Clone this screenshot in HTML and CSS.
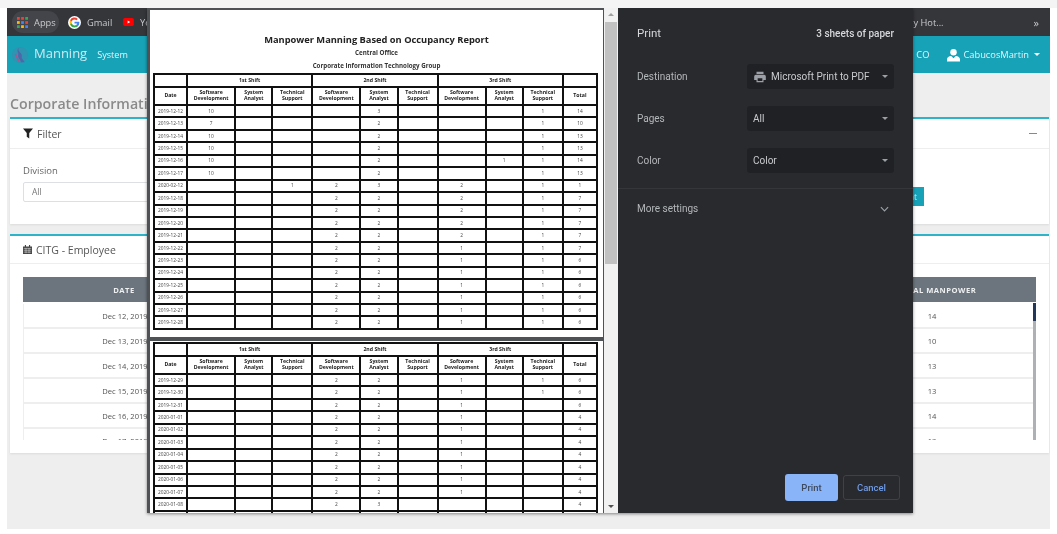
FILE: index.html
```html
<!DOCTYPE html>
<html lang="en">
<head>
<meta charset="utf-8">
<title>Manning - Print</title>
<link rel="stylesheet" href="styles.css">
</head>
<body>
<div class="topstrip"></div>
<div class="shot">
  <div class="bookmarks">
    <div class="bm bm-apps">
      <svg class="ic-apps" viewBox="0 0 12 12" width="11" height="11"><g><rect width="3" height="3" fill="#ea4335"/><rect x="4.5" width="3" height="3" fill="#ea4335"/><rect x="9" width="3" height="3" fill="#34a853"/><rect y="4.5" width="3" height="3" fill="#fbbc04"/><rect x="4.5" y="4.5" width="3" height="3" fill="#4285f4"/><rect x="9" y="4.5" width="3" height="3" fill="#ea4335"/><rect y="9" width="3" height="3" fill="#34a853"/><rect x="4.5" y="9" width="3" height="3" fill="#fbbc04"/><rect x="9" y="9" width="3" height="3" fill="#4285f4"/></g></svg>
      <span>Apps</span>
    </div>
    <div class="bm bm-gmail">
      <svg viewBox="0 0 24 24" width="13" height="13"><circle cx="12" cy="12" r="12" fill="#fff"/><path d="M21 12.2c0-.7-.1-1.3-.2-1.8H12v3.5h5a4.3 4.3 0 0 1-1.900 2.800v2.300h3A9 9 0 0 0 21 12.200z" fill="#4285f4"/><path d="M12 21c2.500 0 4.600-.8 6.100-2.200l-3-2.300c-.8.6-1.900.9-3.100.9-2.400 0-4.400-1.600-5.100-3.800H3.800v2.400A9 9 0 0 0 12 21z" fill="#34a853"/><path d="M6.900 13.600a5.400 5.400 0 0 1 0-3.400V7.800H3.800a9 9 0 0 0 0 8.200z" fill="#fbbc04"/><path d="M12 6.600c1.300 0 2.500.5 3.500 1.400l2.600-2.600A9 9 0 0 0 3.800 7.800l3.100 2.400C7.600 8.100 9.600 6.600 12 6.600z" fill="#ea4335"/></svg>
      <span>Gmail</span>
    </div>
    <div class="bm bm-yt">
      <svg viewBox="0 0 12 9" width="11" height="8"><rect width="12" height="9" rx="2" fill="#f00"/><path d="M5 2.700v3.600L8 4.500z" fill="#fff"/></svg>
      <span>YouTube</span>
    </div>
    <div class="bm bm-hot"><span>Occupancy Hot...</span></div>
    <div class="bm bm-more">»</div>
  </div>

  <nav class="navbar">
    <svg class="logo" viewBox="0 0 20 20" width="18" height="20"><circle cx="10" cy="10" r="9" fill="#2f93b2"/><path d="M9 2c-3 4 4 6 3 9s3 5 3 7l-4 0c0-3-4-5-3-8S5 5 9 2z" fill="#4f66a8"/><path d="M5 9c1 2 2 5 4 8" stroke="#a5568f" stroke-width="1.500" fill="none"/></svg>
    <span class="brand">Manning</span>
    <span class="nav-link">System</span>
    <span class="nav-co">CO</span>
    <svg class="ic-user" viewBox="0 0 14 14" width="13" height="14"><circle cx="7" cy="4" r="3.500" fill="#fff"/><path d="M0 14v-2.500C0 9.500 2 8.200 4.500 8L7 10.500 9.500 8c2.500.2 4.500 1.500 4.500 3.500V14z" fill="#fff"/></svg>
    <span class="nav-user">CabucosMartin</span>
    <span class="caret caret-white"></span>
  </nav>

  <main class="content">
    <h1 class="page-title">Corporate Information Technology Group</h1>

    <section class="card card-filter">
      <header class="card-head">
        <svg viewBox="0 0 12 12" width="10" height="11"><path d="M0 0h12L7.500 5.500V12l-3-2V5.500z" fill="#222"/></svg>
        <span>Filter</span>
        <span class="collapse-dash"></span>
      </header>
      <div class="card-body">
        <label class="field-label">Division</label>
        <div class="filter-row">
          <div class="select-box">All</div>
          <button class="btn-generate">Print</button>
        </div>
      </div>
    </section>

    <section class="card card-list">
      <header class="card-head card-head-list">
        <svg viewBox="0 0 12 12" width="9" height="11"><path d="M0 2h12v10H0z" fill="#444"/><path d="M2.500 0h1.500v3H2.500zM8 0h1.500v3H8z" fill="#444"/><path d="M1 4.500h10M1 7h10M1 9.500h10M4 4v7M8 4v7" stroke="#fff" stroke-width=".6"/></svg>
        <span>CITG - Employee</span>
      </header>
      <div class="list-wrap">
        <div class="list-row list-head"><span>Date</span><span></span><span></span><span></span><span>Total Manpower</span></div>
        <div class="list-scroll">
          <div class="list-row"><span>Dec 12, 2019</span><span></span><span></span><span></span><span>14</span></div>
          <div class="list-row"><span>Dec 13, 2019</span><span></span><span></span><span></span><span>10</span></div>
          <div class="list-row"><span>Dec 14, 2019</span><span></span><span></span><span></span><span>13</span></div>
          <div class="list-row"><span>Dec 15, 2019</span><span></span><span></span><span></span><span>13</span></div>
          <div class="list-row"><span>Dec 16, 2019</span><span></span><span></span><span></span><span>14</span></div>
          <div class="list-row"><span>Dec 17, 2019</span><span></span><span></span><span></span><span>13</span></div>
        </div>
        <div class="list-bar"><div class="list-thumb"></div></div>
      </div>
    </section>
  </main>

  <div class="dialog">
    <div class="preview">
      <div class="pages">
        <div class="paper paper-1">
          <h2 class="rep-title">Manpower Manning Based on Occupancy Report</h2>
          <p class="rep-sub rep-sub-1">Central Office</p>
          <p class="rep-sub rep-sub-2">Corporate Information Technology Group</p>
          <table class="rep">
            <colgroup><col class="c-date"><col class="c-sd"><col class="c-sa"><col class="c-ts"><col class="c-sd"><col class="c-sa"><col class="c-ts"><col class="c-sd"><col class="c-sa"><col class="c-ts"><col class="c-tot"></colgroup>
            <thead>
              <tr class="h1"><th></th><th colspan="3">1st Shift</th><th colspan="3">2nd Shift</th><th colspan="3">3rd Shift</th><th></th></tr>
              <tr class="h2"><th>Date</th><th>Software Development</th><th>System Analyst</th><th>Technical Support</th><th>Software Development</th><th>System Analyst</th><th>Technical Support</th><th>Software Development</th><th>System Analyst</th><th>Technical Support</th><th>Total</th></tr>
            </thead>
            <tbody>
              <tr><td>2019-12-12</td><td>10</td><td></td><td></td><td></td><td>3</td><td></td><td></td><td></td><td>1</td><td>14</td></tr>
              <tr><td>2019-12-13</td><td>7</td><td></td><td></td><td></td><td>2</td><td></td><td></td><td></td><td>1</td><td>10</td></tr>
              <tr><td>2019-12-14</td><td>10</td><td></td><td></td><td></td><td>2</td><td></td><td></td><td></td><td>1</td><td>13</td></tr>
              <tr><td>2019-12-15</td><td>10</td><td></td><td></td><td></td><td>2</td><td></td><td></td><td></td><td>1</td><td>13</td></tr>
              <tr><td>2019-12-16</td><td>10</td><td></td><td></td><td></td><td>2</td><td></td><td></td><td>1</td><td>1</td><td>14</td></tr>
              <tr><td>2019-12-17</td><td>10</td><td></td><td></td><td></td><td>2</td><td></td><td></td><td></td><td>1</td><td>13</td></tr>
              <tr><td>2020-02-12</td><td></td><td></td><td>1</td><td>2</td><td>3</td><td></td><td>2</td><td></td><td>1</td><td>1</td></tr>
              <tr><td>2019-12-18</td><td></td><td></td><td></td><td>2</td><td>2</td><td></td><td>2</td><td></td><td>1</td><td>7</td></tr>
              <tr><td>2019-12-19</td><td></td><td></td><td></td><td>2</td><td>2</td><td></td><td>2</td><td></td><td>1</td><td>7</td></tr>
              <tr><td>2019-12-20</td><td></td><td></td><td></td><td>2</td><td>2</td><td></td><td>2</td><td></td><td>1</td><td>7</td></tr>
              <tr><td>2019-12-21</td><td></td><td></td><td></td><td>2</td><td>2</td><td></td><td>2</td><td></td><td>1</td><td>7</td></tr>
              <tr><td>2019-12-22</td><td></td><td></td><td></td><td>2</td><td>2</td><td></td><td>1</td><td></td><td>1</td><td>7</td></tr>
              <tr><td>2019-12-23</td><td></td><td></td><td></td><td>2</td><td>2</td><td></td><td>1</td><td></td><td>1</td><td>6</td></tr>
              <tr><td>2019-12-24</td><td></td><td></td><td></td><td>2</td><td>2</td><td></td><td>1</td><td></td><td>1</td><td>6</td></tr>
              <tr><td>2019-12-25</td><td></td><td></td><td></td><td>2</td><td>2</td><td></td><td>1</td><td></td><td>1</td><td>6</td></tr>
              <tr><td>2019-12-26</td><td></td><td></td><td></td><td>2</td><td>2</td><td></td><td>1</td><td></td><td>1</td><td>6</td></tr>
              <tr><td>2019-12-27</td><td></td><td></td><td></td><td>2</td><td>2</td><td></td><td>1</td><td></td><td>1</td><td>6</td></tr>
              <tr><td>2019-12-28</td><td></td><td></td><td></td><td>2</td><td>2</td><td></td><td>1</td><td></td><td>1</td><td>6</td></tr>
            </tbody>
          </table>
        </div>
        <div class="paper paper-2">
          <table class="rep">
            <colgroup><col class="c-date"><col class="c-sd"><col class="c-sa"><col class="c-ts"><col class="c-sd"><col class="c-sa"><col class="c-ts"><col class="c-sd"><col class="c-sa"><col class="c-ts"><col class="c-tot"></colgroup>
            <thead>
              <tr class="h1"><th></th><th colspan="3">1st Shift</th><th colspan="3">2nd Shift</th><th colspan="3">3rd Shift</th><th></th></tr>
              <tr class="h2"><th>Date</th><th>Software Development</th><th>System Analyst</th><th>Technical Support</th><th>Software Development</th><th>System Analyst</th><th>Technical Support</th><th>Software Development</th><th>System Analyst</th><th>Technical Support</th><th>Total</th></tr>
            </thead>
            <tbody>
              <tr><td>2019-12-29</td><td></td><td></td><td></td><td>2</td><td>2</td><td></td><td>1</td><td></td><td>1</td><td>6</td></tr>
              <tr><td>2019-12-30</td><td></td><td></td><td></td><td>2</td><td>2</td><td></td><td>1</td><td></td><td>1</td><td>6</td></tr>
              <tr><td>2019-12-31</td><td></td><td></td><td></td><td>2</td><td>2</td><td></td><td>1</td><td></td><td></td><td>6</td></tr>
              <tr><td>2020-01-01</td><td></td><td></td><td></td><td>2</td><td>2</td><td></td><td>1</td><td></td><td></td><td>4</td></tr>
              <tr><td>2020-01-02</td><td></td><td></td><td></td><td>2</td><td>2</td><td></td><td>1</td><td></td><td></td><td>4</td></tr>
              <tr><td>2020-01-03</td><td></td><td></td><td></td><td>2</td><td>2</td><td></td><td>1</td><td></td><td></td><td>4</td></tr>
              <tr><td>2020-01-04</td><td></td><td></td><td></td><td>2</td><td>2</td><td></td><td>1</td><td></td><td></td><td>4</td></tr>
              <tr><td>2020-01-05</td><td></td><td></td><td></td><td>2</td><td>2</td><td></td><td>1</td><td></td><td></td><td>4</td></tr>
              <tr><td>2020-01-06</td><td></td><td></td><td></td><td>2</td><td>2</td><td></td><td>1</td><td></td><td></td><td>4</td></tr>
              <tr><td>2020-01-07</td><td></td><td></td><td></td><td>2</td><td>2</td><td></td><td>1</td><td></td><td></td><td>4</td></tr>
              <tr><td>2020-01-08</td><td></td><td></td><td></td><td>2</td><td>3</td><td></td><td></td><td></td><td></td><td>4</td></tr>
              <tr><td></td><td></td><td></td><td></td><td></td><td></td><td></td><td></td><td></td><td></td><td></td></tr>
            </tbody>
          </table>
        </div>
      </div>
      <div class="pv-scroll">
        <span class="arrow arrow-up"></span>
        <div class="pv-thumb"></div>
        <span class="arrow arrow-down"></span>
      </div>
    </div>

    <aside class="side">
      <div class="side-top"><span class="side-title">Print</span><span class="side-count">3 sheets of paper</span></div>
      <div class="side-row side-row-first">
        <span class="side-label">Destination</span>
        <div class="side-select">
          <svg viewBox="0 0 24 24" width="14" height="14"><path d="M19 8H5a3 3 0 0 0-3 3v6h4v4h12v-4h4v-6a3 3 0 0 0-3-3zm-3 11H8v-5h8zM18 3H6v4h12z" fill="#9aa0a6"/></svg>
          <span class="sel-text">Microsoft Print to PDF</span>
          <span class="caret"></span>
        </div>
      </div>
      <div class="side-row">
        <span class="side-label">Pages</span>
        <div class="side-select"><span class="sel-text">All</span><span class="caret"></span></div>
      </div>
      <div class="side-row">
        <span class="side-label">Color</span>
        <div class="side-select"><span class="sel-text">Color</span><span class="caret"></span></div>
      </div>
      <div class="side-more">
        <span class="side-label">More settings</span>
        <svg viewBox="0 0 10 6" width="9" height="6"><path d="M1 1l4 4 4-4" stroke="#9aa0a6" stroke-width="1.300" fill="none"/></svg>
      </div>
      <div class="side-actions">
        <button class="pbtn pbtn-print">Print</button>
        <button class="pbtn pbtn-cancel">Cancel</button>
      </div>
    </aside>
  </div>
</div>
</body>
</html>
```
FILE: styles.css
```css
* { box-sizing: border-box; }
html, body { margin: 0; padding: 0; }
body {
  width: 1057px;
  height: 534px;
  overflow: hidden;
  background: #fff;
  font-family: "Open Sans", "Liberation Sans", sans-serif;
}
.topstrip { height: 8px; background: #f4f4f4; }
.shot {
  position: relative;
  width: 1043px;
  height: 521px;
  margin-left: 7px;
  background: #eee;
  overflow: hidden;
  filter: blur(0.5px);
}

/* bookmarks */
.bookmarks {
  display: flex;
  align-items: center;
  height: 28px;
  background: #35363a;
  color: #c9cacc;
  font-size: 9.300px;
}
.bm { display: flex; align-items: center; gap: 6px; white-space: nowrap; }
.bm-apps {
  margin-left: 5px;
  width: 47px;
  height: 22px;
  padding-left: 5px;
  background: #44454a;
  border-radius: 11px;
}
.bm-gmail { margin-left: 9px; width: 55px; }
.bm-yt { width: 100px; }
.bm-hot { margin-left: auto; margin-right: 90px; }
.bm-more { margin-right: 11px; font-size: 11px; }

/* navbar */
.navbar {
  display: flex;
  align-items: center;
  height: 37px;
  background: #17a2b8;
  color: #e3f4f7;
}
.logo { margin-left: 4px; }
.brand { margin-left: 5px; font-size: 13px; line-height: 34px; height: 37px; color: #cdeaf0; }
.nav-link { margin-left: 10px; font-size: 9.100px; }
.nav-co { margin-left: auto; font-size: 9.300px; }
.ic-user { margin-left: 18px; }
.nav-user { margin-left: 3px; font-size: 9.300px; }
.caret {
  width: 0;
  height: 0;
  border-left: 3.500px solid transparent;
  border-right: 3.500px solid transparent;
  border-top: 3.500px solid #9aa0a6;
}
.caret-white { margin: 0 10px 0 5px; border-top-color: #fff; }

/* content */
.content { padding: 0 1px 0 3px; }
.page-title {
  margin: 0;
  height: 44px;
  padding-top: 21px;
  font-size: 14.200px;
  line-height: 20px;
  font-weight: 600;
  white-space: nowrap;
  color: #8a8a8a;
}
.card {
  background: #fff;
  border-top: 2px solid #2fb3c8;
  box-shadow: 0 1px 2px rgba(0, 0, 0, .08);
}
.card-filter { height: 107px; margin-bottom: 10px; }
.card-list { height: 219px; }
.card-head {
  display: flex;
  align-items: center;
  gap: 4px;
  height: 30px;
  padding: 0 13px;
  border-bottom: 1px solid #eee;
  font-size: 10.500px;
  color: #555;
}
.card-head-list { height: 28px; }
.collapse-dash {
  width: 8px;
  height: 1px;
  margin-left: auto;
  margin-right: -1px;
  background: #888;
}
.card-body { padding: 15px 13px 0; }
.field-label { display: block; font-size: 9.500px; line-height: 14px; color: #666; }
.filter-row { display: flex; align-items: flex-start; margin-top: 4px; }
.select-box {
  width: 300px;
  height: 20px;
  padding-left: 8px;
  border: 1px solid #dde0e3;
  border-radius: 2px;
  font-size: 8.500px;
  line-height: 18px;
  color: #777;
}
.btn-generate {
  width: 60px;
  height: 19px;
  margin-left: 541px;
  margin-top: 5px;
  padding: 0 7px;
  border: 0;
  background: #17a2b8;
  color: #cfeef3;
  font: 8.500px "Open Sans", sans-serif;
  text-align: right;
}

/* employee list */
.list-wrap { position: relative; margin: 13px 13px 0; }
.list-row {
  display: grid;
  grid-template-columns: 202px 205px 205px 205px 196px;
  height: 25px;
  align-items: center;
  border-left: 1px solid #eee;
  border-bottom: 2px solid #eee;
  font-size: 7.600px;
  text-align: center;
  color: #555;
}
.list-row span:last-child { padding-right: 14px; }
.list-head {
  border: 0;
  background: #6c757d;
  color: #eef0f1;
  font-weight: 700;
  letter-spacing: .5px;
  text-transform: uppercase;
}
.list-row.list-head span:last-child { padding-right: 3px; }
.list-scroll { height: 138px; padding-top: 2px; overflow: hidden; }
.list-bar {
  position: absolute;
  top: 26px;
  right: 0;
  width: 3px;
  height: 137px;
  background: #aeb1b3;
}
.list-thumb { height: 18px; background: #23375a; }

/* print dialog */
.dialog {
  position: absolute;
  left: 140px;
  top: 0;
  display: flex;
  width: 766px;
  height: 505px;
  box-shadow: 0 1px 3px rgba(0, 0, 0, .45);
}
.preview {
  display: flex;
  width: 471px;
  background: #4f5255;
}
.pages {
  display: flex;
  flex-direction: column;
  gap: 4px;
  flex: 1;
  padding: 2px 1px 0 3px;
  overflow: hidden;
}
.paper { flex: none; width: 453px; background: #fff; padding: 0 3px; }
.paper-1 { height: 327px; padding-top: 23px; }
.paper-2 { height: 172px; padding-top: 1px; overflow: hidden; }
.rep-title {
  margin: 0;
  font-size: 9.300px;
  line-height: 13px;
  font-weight: 700;
  text-align: center;
  color: #222;
}
.rep-sub {
  margin: 0;
  font-size: 6.200px;
  font-weight: 700;
  line-height: 8px;
  text-align: center;
  color: #333;
}
.rep-sub-1 { margin-top: 3px; }
.rep-sub-2 { margin-top: 5px; margin-bottom: 3px; }
.rep {
  width: 445px;
  border-collapse: collapse;
  table-layout: fixed;
  border: 2px solid #111;
}
.rep th, .rep td {
  padding: 0;
  border: 2px solid #111;
  text-align: center;
  overflow: hidden;
  color: #333;
}
.rep th { font-size: 5.200px; line-height: 5.800px; font-weight: 700; color: #222; }
.rep td { height: 12.450px; font-size: 4.800px; line-height: 5px; color: #444; }
.h1 th { height: 13px; }
.h2 th { height: 18px; }
.c-date { width: 33px; }
.c-sd { width: 48px; }
.c-sa { width: 37px; }
.c-ts { width: 40px; }
.c-tot { width: 34px; }

.pv-scroll {
  position: relative;
  flex: none;
  width: 14px;
  background: #f1f1f1;
}
.arrow {
  position: absolute;
  left: 4px;
  width: 0;
  height: 0;
  border-left: 3px solid transparent;
  border-right: 3px solid transparent;
}
.arrow-up { top: 5px; border-bottom: 3px solid #a0a0a0; }
.arrow-down { bottom: 5px; border-top: 3px solid #505050; }
.pv-thumb {
  position: absolute;
  top: 14px;
  left: 1px;
  width: 12px;
  height: 242px;
  background: #c1c1c1;
}

.side {
  display: flex;
  flex-direction: column;
  width: 295px;
  background: #292a2d;
  color: #c6c8cb;
  font-family: Roboto, "Liberation Sans", sans-serif;
  font-size: 10px;
}
.side-top {
  display: flex;
  justify-content: space-between;
  align-items: center;
  height: 26px;
  margin: 12px 19px 0;
}
.side-title { font-size: 11.500px; color: #d5d7da; }
.side-count { font-size: 10px; font-weight: 500; color: #d5d7da; }
.side-row {
  display: flex;
  align-items: center;
  height: 25px;
  margin: 17px 19px 0;
}
.side-row-first { margin-top: 18px; }
.side-label { width: 110px; color: #b4b7ba; }
.side-select {
  display: flex;
  align-items: center;
  gap: 6px;
  width: 147px;
  height: 25px;
  padding: 0 6px;
  background: #202124;
  border-radius: 3px;
  color: #c9cbce;
}
.side-select svg { margin-right: -2px; }
.sel-text { white-space: nowrap; }
.side-select .caret { margin-left: auto; margin-right: 0; }
.side-more {
  display: flex;
  justify-content: space-between;
  align-items: center;
  height: 40px;
  margin-top: 15px;
  padding: 0 24px 0 19px;
  border-top: 1px solid #35363a;
}
.side-actions {
  display: flex;
  align-items: center;
  gap: 5px;
  margin-top: auto;
  margin-bottom: 12px;
  padding-left: 167px;
}
.pbtn {
  height: 25px;
  padding: 0;
  border-radius: 3px;
  font: 500 9.500px Roboto, "Liberation Sans", sans-serif;
}
.pbtn-print {
  width: 53px;
  height: 27px;
  border: 0;
  background: #8ab4f8;
  color: #3d4a60;
}
.pbtn-cancel {
  width: 57px;
  border: 1px solid #3f4145;
  background: transparent;
  color: #6f9be6;
}
```
